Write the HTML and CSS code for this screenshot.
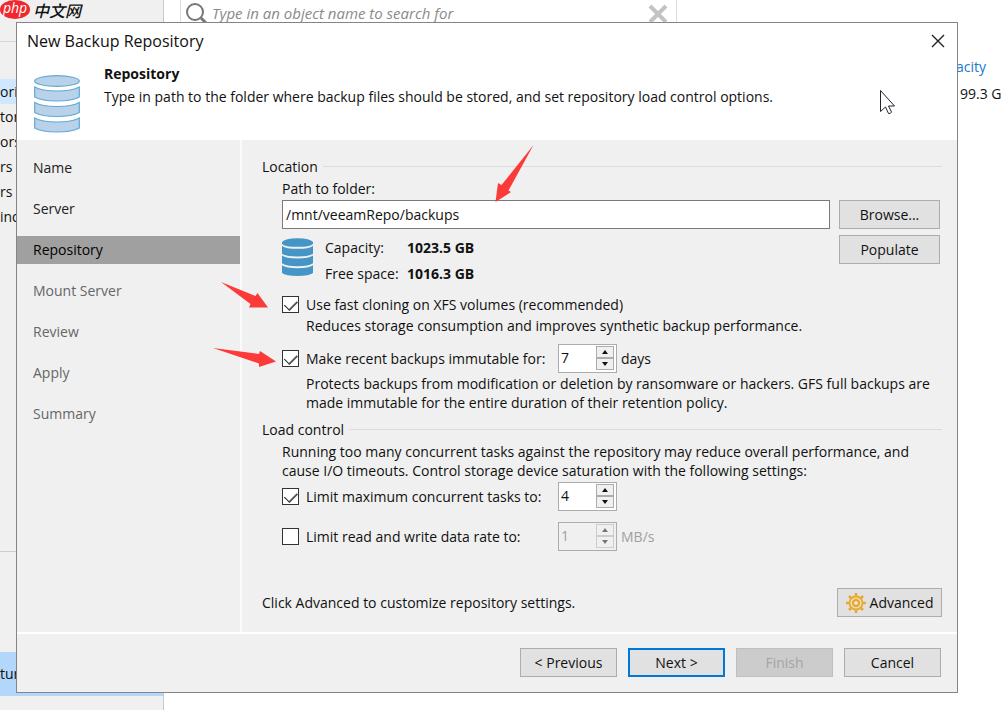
FILE: index.html
```
<!DOCTYPE html>
<html lang="en">
<head>
    <meta charset="UTF-8">
    <meta name="viewport" content="width=device-width, initial-scale=1.0">
    <title>New Backup Repository</title>
    <link rel="stylesheet" href="styles.css">
</head>
<body>
    <!-- Main console behind the wizard -->
    <div class="console">
        <nav class="tree">
            <div class="tree-top"></div>
            <ul class="tree-list">
                <li class="selected">ori</li>
                <li>tor</li>
                <li>ors</li>
                <li>rs</li>
                <li>rs</li>
                <li>ind</li>
            </ul>
            <div class="tree-view">tur</div>
        </nav>
        <main class="list">
            <div class="search">
                <svg width="24" height="24" viewBox="0 0 24 24" fill="none" stroke="#777" stroke-width="2">
                    <circle cx="10" cy="10" r="8"/>
                    <path d="M16 16l6 6" stroke-width="3"/>
                </svg>
                <input type="text" placeholder="Type in an object name to search for" aria-label="Search">
                <svg width="20" height="20" viewBox="0 0 20 20" stroke="#c3c3c3" stroke-width="4">
                    <path d="M2 2l16 16M18 2L2 18"/>
                </svg>
            </div>
            <div class="capacity">
                <a href="#">acity</a>
                <span>99.3 G</span>
            </div>
        </main>
    </div>

    <div class="brand">
        <span class="brand-php">php</span>
        <span class="brand-name" lang="zh">中文网</span>
    </div>

    <div class="dialog" role="dialog" aria-labelledby="dialog-title">
        <header class="dialog-header">
            <div class="title-bar">
                <h1 id="dialog-title">New Backup Repository</h1>
                <button type="button" class="close" aria-label="Close">
                    <svg width="14" height="14" viewBox="0 0 14 14" stroke="#222" stroke-width="1.4">
                        <path d="M1 1l12 12M13 1L1 13"/>
                    </svg>
                </button>
            </div>
            <div class="intro">
                <svg width="46" height="58" viewBox="0 0 46 58" fill="#b9d2ea" stroke="#5fa9d6" stroke-width="1.2">
                    <ellipse cx="23" cy="6" rx="22.3" ry="5.3"/>
                    <path d="M.7 12q7 4 22.3 4t22.3-4v10q-7 4-22.3 4T.7 22z"/>
                    <path d="M.7 27.500q7 4 22.3 4t22.3-4v10q-7 4-22.3 4T.7 37.500z"/>
                    <path d="M.7 43q7 4 22.3 4t22.3-4v10q-7 4-22.3 4T.7 53z"/>
                </svg>
                <div class="intro-text">
                    <h2>Repository</h2>
                    <p>Type in path to the folder where backup files should be stored, and set repository load control options.</p>
                </div>
            </div>
        </header>

        <div class="dialog-body">
            <ol class="steps">
                <li class="done">Name</li>
                <li class="done">Server</li>
                <li class="current">Repository</li>
                <li>Mount Server</li>
                <li>Review</li>
                <li>Apply</li>
                <li>Summary</li>
            </ol>

            <form class="settings">
                <section>
                    <h3>Location</h3>
                    <div class="group">
                        <label for="path">Path to folder:</label>
                        <div class="location">
                            <div class="path">
                                <input type="text" id="path" value="/mnt/veeamRepo/backups">
                                <div class="stats">
                                    <svg width="31" height="39" viewBox="0 0 32 40" fill="#4595c7">
                                        <path d="M0 4Q3 0 16 0t16 4v2q-3 3-16 3T0 6z"/>
                                        <path d="M0 8q4 3 16 3t16-3v8q-4 3-16 3T0 16z"/>
                                        <path d="M0 18q4 3 16 3t16-3v8q-4 3-16 3T0 26z"/>
                                        <path d="M0 28q4 3 16 3t16-3v8q-4 3-16 3T0 36z"/>
                                    </svg>
                                    <dl>
                                        <dt>Capacity:</dt>
                                        <dd>1023.5 GB</dd>
                                        <dt>Free space:</dt>
                                        <dd>1016.3 GB</dd>
                                    </dl>
                                </div>
                            </div>
                            <div class="actions">
                                <button type="button" class="btn">Browse...</button>
                                <button type="button" class="btn">Populate</button>
                            </div>
                        </div>

                        <div class="option single">
                            <input type="checkbox" id="fast-clone" checked>
                            <label for="fast-clone">Use fast cloning on XFS volumes (recommended)</label>
                        </div>
                        <p class="hint">Reduces storage consumption and improves synthetic backup performance.</p>

                        <div class="option immutable">
                            <input type="checkbox" id="immutable" checked>
                            <label for="immutable">Make recent backups immutable for:</label>
                            <span class="spinner">
                                <input type="number" value="7" aria-label="Immutability days">
                                <span class="spin-buttons">
                                    <button type="button" class="up" aria-label="More days"></button>
                                    <button type="button" class="down" aria-label="Fewer days"></button>
                                </span>
                            </span>
                            <span>days</span>
                        </div>
                        <p class="hint">Protects backups from modification or deletion by ransomware or hackers. GFS full backups are<br>made immutable for the entire duration of their retention policy.</p>
                    </div>
                </section>

                <section class="load">
                    <h3>Load control</h3>
                    <div class="group">
                        <p>Running too many concurrent tasks against the repository may reduce overall performance, and<br>cause I/O timeouts. Control storage device saturation with the following settings:</p>
                        <div class="option">
                            <input type="checkbox" id="max-tasks" checked>
                            <label for="max-tasks">Limit maximum concurrent tasks to:</label>
                            <span class="spinner">
                                <input type="number" value="4" aria-label="Concurrent tasks">
                                <span class="spin-buttons">
                                    <button type="button" class="up" aria-label="More tasks"></button>
                                    <button type="button" class="down" aria-label="Fewer tasks"></button>
                                </span>
                            </span>
                        </div>
                        <div class="option rate">
                            <input type="checkbox" id="data-rate">
                            <label for="data-rate">Limit read and write data rate to:</label>
                            <span class="spinner disabled">
                                <input type="number" value="1" aria-label="Data rate" disabled>
                                <span class="spin-buttons">
                                    <button type="button" class="up" aria-label="Raise rate" disabled></button>
                                    <button type="button" class="down" aria-label="Lower rate" disabled></button>
                                </span>
                            </span>
                            <span class="muted">MB/s</span>
                        </div>
                    </div>
                </section>

                <div class="advanced">
                    <p>Click Advanced to customize repository settings.</p>
                    <button type="button" class="btn">
                        <svg width="20" height="20" viewBox="0 0 20 20" fill="none" stroke="#e5aa35">
                            <path d="M10 0v4M10 16v4M0 10h4M16 10h4M3 3l3 3M14 14l3 3M17 3l-3 3M6 14l-3 3" stroke-width="2.6"/>
                            <circle cx="10" cy="10" r="6.500" fill="#f4dfae" stroke-width="1.8"/>
                            <circle cx="10" cy="10" r="3" fill="#f0f0f0" stroke-width="2.4"/>
                        </svg>
                        Advanced
                    </button>
                </div>
            </form>
        </div>

        <footer class="dialog-footer">
            <button type="button" class="btn">&lt; Previous</button>
            <button type="button" class="btn primary">Next &gt;</button>
            <button type="button" class="btn" disabled>Finish</button>
            <button type="button" class="btn">Cancel</button>
        </footer>
    </div>

    <!-- Red pointers and the mouse cursor -->
    <svg class="marks" width="1002" height="710" viewBox="0 0 1002 710">
        <g fill="#fc3a38">
            <path d="M533.500 145L508.500 190.500l2.500 1.500-15.500 10 2.500-19 3.500 2z"/>
            <path d="M221 282l34.500 14 2-3 10.500 14.500-19 0 1.500-3.500z"/>
            <path d="M213 348l46 6 1-3 16 10.500-17 5.500v-3.500z"/>
        </g>
        <path d="M880.500 90.500v21l5-4.500 3 6.500q2 .5 3-1.500l-3-6h6z" fill="#fff" stroke="#23232f"/>
    </svg>
</body>
</html>
```

FILE: styles.css
```
* {
    box-sizing: border-box;
}

body {
    font-family: "Open Sans", "Noto Sans", sans-serif;
    font-size: 14px;
    line-height: 19px;
    color: #111;
    margin: 0;
    background-color: #fff;
}

h1, h2, h3, p, ul, ol, dl, dd {
    margin: 0;
    padding: 0;
}

ul, ol {
    list-style: none;
}

button, input {
    font: inherit;
    color: inherit;
}

/* Console */
.console {
    display: flex;
    height: 100vh;
    overflow: hidden;
}

.tree {
    display: flex;
    flex-direction: column;
    width: 164px;
    background-color: #f0f0f0;
    border-right: 1px solid #c8c8c8;
    padding-bottom: 14px;
}

.tree-top {
    height: 42px;
    border-bottom: 1px solid #d5d5d5;
}

.tree-list {
    flex: 1;
    padding-top: 37px;
    border-bottom: 1px solid #ccc;
    margin-bottom: 100px;
}

.tree-list li {
    height: 25px;
    line-height: 25px;
}

.tree-list .selected {
    background-color: #cfe8ff;
}

.tree-view {
    height: 44px;
    line-height: 44px;
    background-color: #b3d7fb;
}

.list {
    flex: 1;
    display: flex;
    flex-direction: column;
    padding: 0 0 0 16px;
}

.search {
    display: flex;
    align-items: center;
    gap: 3px;
    width: 497px;
    height: 28px;
    padding: 0 8px 0 4px;
    border: 1px solid #ddd;
    border-top: none;
}

.search input {
    flex: 1;
    border: none;
    outline: none;
    padding: 0;
    font-size: 15px;
    font-style: italic;
}

.search input::placeholder {
    color: #8a8a8a;
}

.capacity {
    display: flex;
    flex-direction: column;
    gap: 8px;
    align-self: flex-end;
    width: 46px;
    padding-top: 29px;
    white-space: nowrap;
}

.capacity a {
    color: #1979ca;
    text-decoration: none;
}

.capacity span {
    padding-left: 4px;
}

.brand {
    position: absolute;
    top: 0;
    left: 0;
    display: flex;
    align-items: center;
    gap: 3px;
}

.brand-php {
    width: 30px;
    height: 19px;
    border-radius: 50%;
    background-color: #f0282d;
    color: #fff;
    font-size: 14px;
    line-height: 16px;
    font-style: italic;
    text-align: center;
}

.brand-name {
    font-family: "Noto Sans CJK SC", sans-serif;
    font-size: 16px;
    font-weight: 500;
    font-style: italic;
    line-height: 18px;
    padding-right: 4px;
}

/* Wizard window */
.dialog {
    position: absolute;
    top: 22px;
    left: 16px;
    right: 44px;
    background-color: #f0f0f0;
    border: 1px solid #858585;
}

.dialog-header {
    background-color: #fff;
    padding: 0 10px 7px;
}

.title-bar {
    display: flex;
    justify-content: space-between;
    align-items: center;
    height: 36px;
}

.title-bar h1 {
    font-size: 16px;
    font-weight: normal;
}

.close {
    display: flex;
    border: none;
    background: none;
    padding: 2px;
}

.intro {
    display: flex;
    align-items: flex-end;
    gap: 24px;
    height: 74px;
    padding-left: 7px;
}

.intro-text {
    display: flex;
    flex-direction: column;
    gap: 4px;
    align-self: flex-start;
    padding-top: 5px;
}

.intro h2 {
    font-size: 14px;
}

.dialog-body {
    display: flex;
    border-bottom: 2px solid #fff;
}

.steps {
    display: flex;
    flex-direction: column;
    gap: 13px;
    width: 225px;
    padding-top: 14px;
    border-right: 2px solid #fafafa;
    color: #666;
}

.steps li {
    height: 28px;
    line-height: 28px;
    padding-left: 16px;
}

.steps .done {
    color: #222;
}

.steps .current {
    background-color: #a0a0a0;
    color: #000;
}

.settings {
    flex: 1;
    padding: 17px 15px 15px 20px;
}

.settings h3 {
    display: flex;
    align-items: center;
    gap: 5px;
    font-size: 14px;
    font-weight: normal;
}

.settings h3::after {
    content: "";
    flex: 1;
    border-top: 1px solid #dcdcdc;
}

.group {
    padding: 3px 0 0 20px;
}

.location {
    display: flex;
    gap: 9px;
    padding: 2px 2px 0 0;
}

.path {
    flex: 1;
}

.path input {
    display: block;
    width: 100%;
    height: 29px;
    padding: 0 3px;
    background-color: #fff;
    border: 1px solid #7a7a7a;
}

.stats {
    display: flex;
    gap: 12px;
    padding-top: 9px;
}

.stats dl {
    display: grid;
    grid-template-columns: 73px auto;
    gap: 7px 9px;
    white-space: nowrap;
}

.stats dd {
    font-weight: bold;
}

.actions {
    display: flex;
    flex-direction: column;
    gap: 6px;
    width: 101px;
}

.btn {
    display: flex;
    justify-content: center;
    align-items: center;
    height: 29px;
    padding: 0;
    background-color: #e1e1e1;
    border: 1px solid #adadad;
}

.btn:disabled {
    background-color: #ccc;
    border-color: #bfbfbf;
    color: #a5a5a5;
}

.btn.primary {
    border: 2px solid #0078d7;
}

.option {
    display: flex;
    align-items: center;
    height: 29px;
    margin-top: 2px;
}

.option.single {
    height: 19px;
    margin-top: 12px;
}

.option.immutable {
    margin-top: 9px;
}

.option.rate {
    margin-top: 11px;
}

.option input[type="checkbox"] {
    appearance: none;
    width: 17px;
    height: 17px;
    margin: 0 7px 0 0;
    background-color: #fff;
    border: 1px solid #333;
}

.option input[type="checkbox"]:checked::after {
    content: "";
    display: block;
    width: 11px;
    height: 6px;
    margin: 3px 0 0 2px;
    border-left: 1px solid #222;
    border-bottom: 2px solid #555;
    transform: rotate(-45deg);
}

.option label {
    width: 252px;
    white-space: nowrap;
}

.hint {
    padding: 2px 0 0 24px;
    white-space: nowrap;
}

.immutable + .hint {
    padding-top: 1px;
}

.load {
    padding-top: 8px;
}

.load p {
    white-space: nowrap;
}

.spinner {
    display: flex;
    width: 59px;
    height: 29px;
    margin-right: 4px;
    padding: 1px 2px;
    background-color: #fff;
    border: 1px solid #ababb3;
}

.spinner input {
    appearance: textfield;
    flex: 1;
    min-width: 0;
    height: 22px;
    padding: 0;
    border: none;
    background: none;
}

.spinner input::-webkit-inner-spin-button {
    appearance: none;
}

.spin-buttons {
    display: flex;
    flex-direction: column;
    width: 18px;
}

.spin-buttons button {
    display: flex;
    justify-content: center;
    align-items: center;
    height: 12px;
    padding: 0;
    background-color: #f0f0f0;
    border: 1px solid #acacac;
}

.spin-buttons button::before {
    content: "";
    border: 3px solid transparent;
}

.spin-buttons .up::before {
    border-top: none;
    border-bottom: 4px solid #111;
}

.spin-buttons .down::before {
    border-bottom: none;
    border-top: 4px solid #111;
}

.disabled, .muted {
    color: #a0a0a0;
}

.spinner.disabled {
    background-color: #f0f0f0;
}

.disabled .spin-buttons button {
    border-color: #ccc;
}

.disabled .spin-buttons .up::before {
    border-bottom-color: #777;
}

.disabled .spin-buttons .down::before {
    border-top-color: #777;
}

.advanced {
    display: flex;
    justify-content: space-between;
    align-items: center;
    padding-top: 37px;
}

.advanced .btn {
    width: 105px;
    gap: 4px;
}

.dialog-footer {
    display: flex;
    justify-content: flex-end;
    gap: 11px;
    padding: 14px 16px 15px;
}

.dialog-footer .btn {
    width: 97px;
}

.marks {
    position: absolute;
    top: 0;
    left: 0;
    pointer-events: none;
}
```
